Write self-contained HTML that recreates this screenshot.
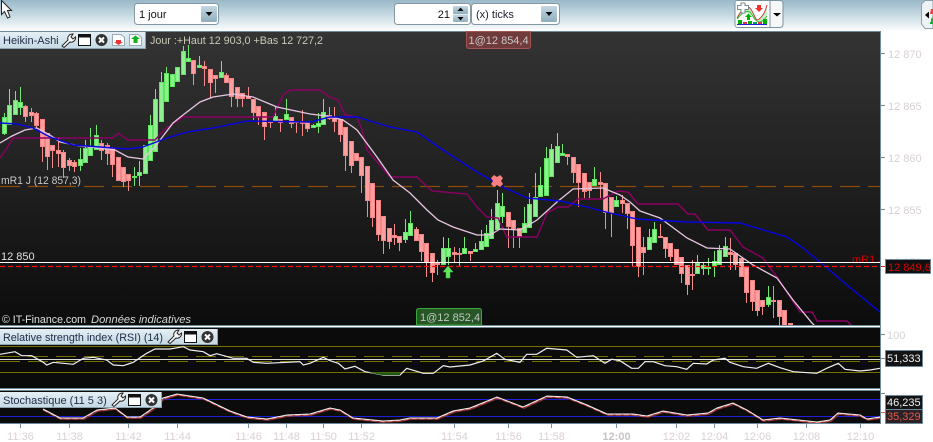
<!DOCTYPE html>
<html><head><meta charset="utf-8"><style>
html,body{margin:0;padding:0;background:#fff;width:933px;height:442px;overflow:hidden}
svg{display:block}
text{font-family:"Liberation Sans",Arial,sans-serif;font-size:11px}
</style></head><body>
<svg width="933" height="442" viewBox="0 0 933 442" xmlns="http://www.w3.org/2000/svg">
<defs>
<linearGradient id="top" x1="0" y1="0" x2="0" y2="1"><stop offset="0" stop-color="#9ab8c8"/><stop offset=".5" stop-color="#c8dbe3"/><stop offset="1" stop-color="#fdfefe"/></linearGradient>
<linearGradient id="pan" x1="0" y1="0" x2="0" y2="1"><stop offset="0" stop-color="#343434"/><stop offset=".45" stop-color="#222"/><stop offset="1" stop-color="#0c0c0c"/></linearGradient>
<linearGradient id="btn" x1="0" y1="0" x2="0" y2="1"><stop offset="0" stop-color="#c4d8e2"/><stop offset="1" stop-color="#8fadbd"/></linearGradient>
<linearGradient id="leg" x1="0" y1="0" x2="0" y2="1"><stop offset="0" stop-color="#e4eff4"/><stop offset="1" stop-color="#c4d9e4"/></linearGradient>
<clipPath id="c1"><rect x="0" y="32" width="880" height="293"/></clipPath>
<clipPath id="c2"><rect x="0" y="391" width="880" height="32"/></clipPath>
</defs>

<rect x="0" y="0" width="933" height="31" fill="url(#top)"/>
<rect x="881" y="31" width="52" height="411" fill="#fff"/>
<rect x="0" y="31" width="880" height="294" fill="url(#pan)"/>
<rect x="0" y="31" width="881" height="1" fill="#70899a"/>
<rect x="880" y="31" width="1" height="393" fill="#70899a"/>
<rect x="0" y="325" width="881" height="1" fill="#70899a"/>
<rect x="0" y="327" width="881" height="1" fill="#70899a"/>
<rect x="0" y="328" width="880" height="60" fill="#0b0b0b"/>
<rect x="0" y="388" width="881" height="1" fill="#70899a"/>
<rect x="0" y="390" width="881" height="1" fill="#70899a"/>
<rect x="0" y="391" width="880" height="32" fill="#0b0b0b"/>
<rect x="0" y="423" width="881" height="1" fill="#70899a"/>

<!-- cursor -->
<path d="M1.500 .5V14.500L4.500 11.500L7.500 18L10 17L7.500 10.500H11.500L1.500 .5Z" fill="#fff" stroke="#222" stroke-width="1"/>

<!-- selects -->
<rect x="134.500" y="3.500" width="84" height="21" rx="3" fill="#fff" stroke="#8498a4"/>
<text x="139" y="18" font-size="11" fill="#111">1 jour</text>
<rect x="201" y="6" width="16" height="16" rx="1" fill="url(#btn)"/>
<path d="M205.500 12h7l-3.500 4z" fill="#000"/>

<rect x="394.500" y="3.500" width="76" height="21" rx="3" fill="#fff" stroke="#8498a4"/>
<text x="450" y="18" text-anchor="end" fill="#111">21</text>
<rect x="453" y="6" width="15" height="8" rx="1" fill="url(#btn)"/>
<rect x="453" y="14.500" width="15" height="7.500" rx="1" fill="url(#btn)"/>
<path d="M457.500 11h6l-3-3.500zM457.500 17h6l-3 3.500z" fill="#000"/>

<rect x="471.500" y="3.500" width="88" height="21" rx="3" fill="#fff" stroke="#8498a4"/>
<text x="476" y="18" fill="#223">(x) ticks</text>
<rect x="541" y="6" width="16" height="16" rx="1" fill="url(#btn)"/>
<path d="M545.500 12h7l-3.500 4z" fill="#000"/>

<!-- strategy button -->
<rect x="735" y=".5" width="48" height="27" rx="3" fill="#f6f8f8" stroke="#7a919e"/>
<rect x="735.500" y="1" width="34" height="26" rx="2" fill="#fff"/>
<rect x="769.500" y="1" width="1" height="26" fill="#7a919e"/>
<path d="M773 13h8l-4 3.500z" fill="#000"/>
<path d="M737 17C742 8 746 5 750 8C754 13 755 18 757 21C760 17 764 16 767 8V16C763 23 756 23 753 18C750 12 745 10 737 19Z" fill="#c8eec8"/>
<path d="M737 18C742 9 746 5 750 8C754 13 755 19 757 20C761 19 765 13 767 5" fill="none" stroke="#d04040" stroke-width="1"/>
<path d="M737 19C742 13 746 10 750 12C754 17 756 22 759 22C762 22 765 19 767 16" fill="none" stroke="#30c030" stroke-width="1"/>
<path d="M737.500 8.500V5.500H741V3H745V5.500H748.500V9.500H745V13H741V9.500H737.500Z" fill="#fff" stroke="#7a8a92"/>
<path d="M748.500 13.500l-3.500 3.500h2v3h3v-3h2z" fill="#00b000"/>
<path d="M757 5h4v3h2l-4 4-4-4h2z" fill="#f03030"/>
<rect x="738" y="20" width="4" height="4" fill="#00b000"/><rect x="743" y="22" width="4" height="2" fill="#e03050"/><rect x="748" y="21" width="4" height="3" fill="#00b000"/><rect x="753" y="22" width="4" height="2" fill="#00a060"/><rect x="758" y="22" width="4" height="2" fill="#e03050"/><rect x="763" y="19" width="4" height="5" fill="#00b000"/>
<rect x="737" y="24" width="30" height="1" fill="#2020e0"/>

<!-- far right button -->
<path d="M933 .5H925L921.500 4V24L925 28.500H933Z" fill="#edf2f4" stroke="#8aa0ac"/>
<path d="M925 15l4-3.500v7z" fill="#000"/>
<path d="M931 9h2v5h-3z" fill="#f04040"/>
<path d="M931 19l2-2v7h-3v-2h1z" fill="#10b030"/>

<!-- chart content -->
<g clip-path="url(#c1)">
<path d="M0 186.500H880" stroke="#8a4c08" stroke-width="1.200" stroke-dasharray="20 8"/>
<g stroke="#f58c8c" stroke-width="1" fill="none">
<path d="M25.500 105V122M31.500 108V122M36.500 112V128M42.500 119V162M47.500 133V170M52.500 145V168M58.500 137V167M63.500 150V178M69.500 158V171M74.500 160V172M101.500 140V160M107.500 143V165M112.500 147V177M118.500 157V180M123.500 167V187M128.500 174V191M193.500 60V85M204.500 61V86M210.500 69V98M215.500 75V93M226.500 73V83M231.500 78V107M237.500 87V107M242.500 93V107M248.500 87V99M253.500 99V120M258.500 106V125M264.500 112V140M270.500 121V128M280.500 119V132M291.500 117V128M296.500 121V133M302.500 110V136M307.500 122V132M329.500 107V120M334.500 107V132M340.500 119V142M345.500 127V171M351.500 141V173M356.500 153V161M361.500 157V193M367.500 166V217M372.500 183V227M378.500 200V241M383.500 216V254M389.500 228V249M394.500 224V245M399.500 236V251M416.500 227V241M421.500 234V261M426.500 243V277M432.500 253V282M437.500 260V275M454.500 247V263M459.500 248V266M470.500 251V261M508.500 212V248M513.500 220V248M519.500 228V248M567.500 154V165M573.500 157V183M578.500 164V207M584.500 173V198M589.500 182V198M600.500 172V198M605.500 183V229M611.500 197V237M622.500 195V213M627.500 203V229M632.500 211V267M638.500 227V277M643.500 237V275M660.500 224V238M665.500 237V258M670.500 243V261M676.500 249V265M681.500 257V283M687.500 265V295M692.500 260V290M730.500 238V270M735.500 253V270M741.500 258V277M746.500 267V303M752.500 280V311M757.500 290V316M762.500 300V315M773.500 286V318M779.500 300V325M784.500 310V326M790.500 323V326"/>
</g>
<path fill="#ff9f9f" stroke="#f68484" d="M23.500 106.500h4v10h-4zM29.500 112.500h4v3h-4zM34.500 113.500h4v12h-4zM40.500 119.500h4v27h-4zM45.500 133.500h4v23h-4zM50.500 145.500h4v5h-4zM56.500 150.500h4v3h-4zM61.500 152.500h4v15h-4zM67.500 160.500h4v5h-4zM72.500 162.500h4v4h-4zM99.500 143.500h4v7h-4zM105.500 145.500h4v8h-4zM110.500 148.500h4v16h-4zM116.500 157.500h4v23h-4zM121.500 167.500h4v14h-4zM126.500 174.500h4v6h-4zM191.500 60.500h4v13h-4zM202.500 66.500h4v2h-4zM208.500 69.500h4v13h-4zM213.500 75.500h4v3h-4zM224.500 75.500h4v7h-4zM229.500 78.500h4v18h-4zM235.500 87.500h4v11h-4zM240.500 93.500h4v5h-4zM246.500 96.500h4v2h-4zM251.500 99.500h4v13h-4zM256.500 106.500h4v10h-4zM262.500 112.500h4v14h-4zM268.500 121.500h4v1h-4zM278.500 119.500h4v3h-4zM289.500 117.500h4v6h-4zM294.500 121.500h4v1h-4zM300.500 122.500h4v1h-4zM305.500 122.500h4v6h-4zM327.500 115.500h4v3h-4zM332.500 117.500h4v4h-4zM338.500 119.500h4v15h-4zM343.500 127.500h4v28h-4zM349.500 141.500h4v24h-4zM354.500 153.500h4v7h-4zM359.500 157.500h4v18h-4zM365.500 166.500h4v34h-4zM370.500 183.500h4v34h-4zM376.500 200.500h4v34h-4zM381.500 216.500h4v24h-4zM387.500 228.500h4v13h-4zM392.500 235.500h4v2h-4zM397.500 236.500h4v6h-4zM414.500 229.500h4v11h-4zM419.500 234.500h4v17h-4zM424.500 243.500h4v19h-4zM430.500 253.500h4v19h-4zM435.500 263.500h4v1h-4zM452.500 252.500h4v2h-4zM457.500 253.500h4v1h-4zM468.500 251.500h4v2h-4zM506.500 212.500h4v14h-4zM511.500 220.500h4v8h-4zM517.500 228.500h4v8h-4zM565.500 154.500h4v2h-4zM571.500 157.500h4v15h-4zM576.500 164.500h4v18h-4zM582.500 173.500h4v18h-4zM587.500 182.500h4v8h-4zM598.500 182.500h4v2h-4zM603.500 183.500h4v29h-4zM609.500 197.500h4v15h-4zM620.500 200.500h4v3h-4zM625.500 203.500h4v10h-4zM630.500 211.500h4v34h-4zM636.500 227.500h4v39h-4zM641.500 247.500h4v5h-4zM658.500 236.500h4v1h-4zM663.500 237.500h4v11h-4zM668.500 243.500h4v13h-4zM674.500 249.500h4v15h-4zM679.500 257.500h4v16h-4zM685.500 265.500h4v19h-4zM690.500 274.500h4v1h-4zM728.500 252.500h4v2h-4zM733.500 253.500h4v11h-4zM739.500 258.500h4v18h-4zM744.500 267.500h4v25h-4zM750.500 280.500h4v21h-4zM755.500 290.500h4v20h-4zM760.500 300.500h4v6h-4zM771.500 300.500h4v1h-4zM777.500 300.500h4v16h-4zM782.500 310.500h4v16h-4zM788.500 323.500h4v3h-4z"/>
<g stroke="#74e874" stroke-width="1" fill="none">
<path d="M4.500 113V135M9.500 89V125M15.500 91V115M20.500 87V115M80.500 148V171M85.500 140V163M90.500 128V156M96.500 125V150M134.500 167V186M139.500 161V186M145.500 145V174M150.500 115V161M155.500 89V152M161.500 72V122M166.500 67V102M172.500 74V87M177.500 67V82M183.500 46V75M188.500 45V62M199.500 56V68M221.500 61V78M275.500 107V122M286.500 99V120M313.500 124V128M318.500 113V133M323.500 99V125M405.500 219V243M410.500 211V236M443.500 237V265M448.500 238V265M464.500 237V254M475.500 243V252M481.500 230V250M486.500 225V247M491.500 209V239M497.500 190V230M502.500 193V223M524.500 207V233M529.500 193V228M535.500 173V217M540.500 167V197M546.500 147V196M551.500 144V177M557.500 133V163M562.500 144V156M594.500 167V186M616.500 196V207M649.500 229V250M654.500 222V243M697.500 255V274M703.500 262V275M708.500 258V275M714.500 251V277M719.500 245V265M725.500 237V257M768.500 286V307"/>
</g>
<path fill="#8ff08f" stroke="#5ee65e" d="M2.500 117.500h4v16h-4zM7.500 105.500h4v19h-4zM13.500 100.500h4v14h-4zM18.500 102.500h4v5h-4zM78.500 159.500h4v6h-4zM83.500 148.500h4v14h-4zM88.500 147.500h4v8h-4zM94.500 135.500h4v14h-4zM132.500 176.500h4v1h-4zM137.500 172.500h4v3h-4zM143.500 145.500h4v28h-4zM148.500 125.500h4v35h-4zM153.500 99.500h4v52h-4zM159.500 82.500h4v39h-4zM164.500 73.500h4v28h-4zM170.500 74.500h4v12h-4zM175.500 67.500h4v14h-4zM181.500 51.500h4v23h-4zM186.500 58.500h4v3h-4zM197.500 65.500h4v2h-4zM219.500 72.500h4v5h-4zM273.500 116.500h4v5h-4zM284.500 114.500h4v5h-4zM311.500 125.500h4v2h-4zM316.500 123.500h4v3h-4zM321.500 112.500h4v12h-4zM403.500 232.500h4v7h-4zM408.500 223.500h4v12h-4zM441.500 248.500h4v16h-4zM446.500 248.500h4v8h-4zM462.500 248.500h4v5h-4zM473.500 249.500h4v2h-4zM479.500 241.500h4v8h-4zM484.500 233.500h4v13h-4zM489.500 220.500h4v18h-4zM495.500 203.500h4v26h-4zM500.500 206.500h4v10h-4zM522.500 223.500h4v9h-4zM527.500 204.500h4v23h-4zM533.500 197.500h4v19h-4zM538.500 185.500h4v11h-4zM544.500 158.500h4v37h-4zM549.500 149.500h4v27h-4zM555.500 146.500h4v16h-4zM560.500 153.500h4v2h-4zM592.500 179.500h4v6h-4zM614.500 200.500h4v6h-4zM647.500 237.500h4v12h-4zM652.500 229.500h4v13h-4zM695.500 263.500h4v10h-4zM701.500 265.500h4v3h-4zM706.500 267.500h4v1h-4zM712.500 261.500h4v5h-4zM717.500 250.500h4v14h-4zM723.500 246.500h4v10h-4zM766.500 297.500h4v7h-4z"/>

<path d="M0 158L7 148L13 138H113L118 133L128 140H155L165 129L183 117H273L283 95L290 90H320L330 97L338 100L345 115L357 117L362 130L367 150L390 177H417L432 191L467 194L477 207L487 217L498 218L507 237H537L547 213L558 207H568L578 199H603L618 191L628 192L638 204H678L688 214H695L708 230H730L743 247L763 258L777 277L800 312H812L817 321H847L852 326" fill="none" stroke="#8c0064" stroke-width="1.400"/>
<path d="M0 143L12 136L25 130L37 128L50 135L60 142L80 146L115 150L128 157L143 159L154 148L173 123L183 115L200 102L213 97L233 94L253 97L277 107L310 114L327 116L343 120L353 127L357 130L377 157L393 180L410 193L427 210L438 220L453 227L477 235H490L500 229L520 230L537 220L557 202L573 189L603 188L620 195L630 202L640 211L660 218L687 238L707 248L730 249L753 265L777 278L793 300L812 323L816 327" fill="none" stroke="#e8c6e2" stroke-width="1.300"/>
<path d="M0 123L17 124L33 128L50 137L73 145L100 147L127 149L143 147L167 138L187 132L213 128L247 121L310 122L330 117H357L390 127L417 132L443 150L477 172L503 187L527 198L560 201L587 207L610 213L637 219L687 222L740 223L787 237L803 248L827 268L853 290L880 312" fill="none" stroke="#0404e4" stroke-width="1.400"/>

<text x="852" y="263" fill="#cc0000">mR1 J</text>
<rect x="0" y="262" width="880" height="1" fill="#fff"/>
<path d="M0 266.500H880" stroke="#f01010" stroke-width="1.200" stroke-dasharray="5 3"/>

<!-- markers -->
<path d="M491 178L494 175L497 177L500 175L503 178L501 181L503 184L500 187L497 185L494 187L491 184L493 181Z" fill="#f98080"/>
<path d="M448 266L453 272H450V278H446V272H443Z" fill="#5ee65e" stroke="#3fc73f" stroke-width=".5"/>
</g>

<text x="1" y="184" fill="#c8c8c8" textLength="80" lengthAdjust="spacingAndGlyphs">mR1 J (12 857,3)</text>
<text x="1" y="260" fill="#e0e0e0">12 850</text>
<text x="2" y="323" fill="#e0e0e0" textLength="84" lengthAdjust="spacingAndGlyphs">© IT-Finance.com</text>
<text x="91" y="323" fill="#d8d8d8" font-style="italic" textLength="100" lengthAdjust="spacingAndGlyphs">Données indicatives</text>

<!-- legend -->
<rect x="0" y="32" width="146" height="17" fill="url(#leg)"/>
<rect x="0" y="48" width="146" height="1" fill="#8ba3b0"/><rect x="145" y="32" width="1" height="17" fill="#8ba3b0"/>
<text x="3" y="44" fill="#1c2a48">Heikin-Ashi</text>
<path d="M62 46L68 40C67 37 69 34 73 34L71 37L73 39L75.500 37C76 40 73 43 70 42L64 47.500Z" fill="#fff" stroke="#222" stroke-width="1"/>
<rect x="78.500" y="34.500" width="12" height="11" fill="#fff" stroke="#111"/><rect x="78.500" y="34.500" width="12" height="3" fill="#111"/>
<circle cx="101.500" cy="40" r="6" fill="#333"/><path d="M99 37.500L104 42.500M104 37.500L99 42.500" stroke="#fff" stroke-width="2"/>
<path d="M112.500 34.500H121L124.500 37.500V45.500H112.500Z" fill="#fff" stroke="#99aab4"/><path d="M115 38H122M116 40H121V42H123L118.500 45L114 42H116Z" fill="#e83838"/>
<path d="M129.500 34.500H138L141.500 37.500V45.500H129.500Z" fill="#fff" stroke="#99aab4"/><path d="M135.500 35.500L140 39H137.500V43H133.500V39H131Z" fill="#10b020"/>
<text x="150" y="44" fill="#c9c9b4" textLength="173" lengthAdjust="spacingAndGlyphs">Jour :+Haut 12 903,0 +Bas 12 727,2</text>

<!-- trade tags -->
<path d="M466.500 31.500H530.500V46C530.500 47.500 529.500 48.500 528 48.500H469C467.500 48.500 466.500 47.500 466.500 46Z" fill="#713b3b" stroke="#a05454"/>
<text x="468.500" y="44" fill="#c8c8c8">1@12 854,4</text>
<path d="M416.500 325V311C416.500 309.500 417.500 308.500 419 308.500H479.500C481 308.500 481.500 309.500 481.500 311V325Z" fill="#275727" stroke="#38a838"/>
<text x="420" y="321" fill="#c0c8c0">1@12 852,4</text>

<!-- right axis -->
<g fill="#74899a">
<rect x="881" y="53" width="4" height="1"/><rect x="881" y="105" width="4" height="1"/><rect x="881" y="157" width="4" height="1"/><rect x="881" y="209" width="4" height="1"/><rect x="881" y="334" width="4" height="1"/>
<rect x="881" y="266" width="4" height="1" fill="#e02020"/><rect x="881" y="358" width="4" height="1"/><rect x="881" y="393" width="4" height="1"/><rect x="881" y="412" width="4" height="1" fill="#e06060"/>
</g>
<g fill="#d8d2d2">
<text x="888" y="58">12 870</text><text x="888" y="110">12 865</text><text x="888" y="162">12 860</text><text x="888" y="214">12 855</text>
<text x="888" y="266">12 850</text>
<text x="887" y="339" font-size="13">100</text>
<text x="888" y="402" font-size="13">100</text>
</g>
<rect x="885.500" y="259.500" width="45" height="14" fill="#101010" stroke="#70899a"/>
<text x="888" y="271" fill="#dc0000" font-size="11.500">12 849,6</text>
<rect x="885.500" y="350.500" width="37" height="16" fill="#141414" stroke="#70899a"/>
<text x="887" y="362" fill="#eee">51,333</text>
<rect x="885.500" y="395.500" width="37" height="14" fill="#141414" stroke="#70899a"/>
<text x="887" y="406" fill="#eee">46,235</text>
<rect x="885.500" y="409.500" width="37" height="14" fill="#2a2224" stroke="#70899a"/>
<text x="887" y="420" fill="#e05a50">35,329</text>

<!-- RSI -->
<path d="M0 346.500H880M0 372.500H880" stroke="#757000" fill="none"/>
<path d="M0 356.500H880M0 361.500H880" stroke="#757000" stroke-dasharray="20 8" fill="none"/>
<path d="M0 359.500H880" stroke="#dcdcdc" fill="none"/>
<path d="M0 354.300L15 351.700L21.700 355.700L31.700 355.700L43.300 362.300L46.700 365L53.300 362.300L73.300 364.300L83.300 358.300L93.300 357.300L106.700 360L113.300 365L123.300 365.700L133.300 362.300L146.700 353.300L155 349L170 349L183.300 346.700L190 350L203.300 351.700L210 355.700L216.700 353.700L233.300 358.300L246.700 358.300L253.300 362.300L266.700 363.300L300 361.700L303.300 365L310 363.300L323.300 357.300L330 360.700L338.300 363.300L345 369L355 366.300L365 371.700L383.300 375L400 375L406.700 368.300L423.300 373.300L433.300 373.300L443.300 365.700L450 367L470 365L483.300 361L496.700 353.300L505 359.300L520 362.300L526.700 354.300L536.700 354.300L546.700 348.300L566.700 350L576.700 357.300L593.300 355.700L605 363.300L611.700 359.300L620 360.700L631.700 368.300L638.300 368.300L645 361.700L653.300 361.700L665 365.700L676.700 366.700L686.700 369.300L693.300 363.300L706.700 364L713.300 360L725 358.300L730 362.300L743.300 366.700L756.700 368.300L768.300 363.300L780 367.700L793.300 371.700L816.700 373.300L826.700 368.300L838.300 363.300L845 369.300L860 371L870 370L880 368.300" fill="none" stroke="#f0f0f0" stroke-width="1.200"/>
<path d="M368 372.500L382 375L400 375L400 372.500Z" fill="#1c5a10"/>
<rect x="0" y="329" width="217" height="16" fill="url(#leg)"/>
<rect x="0" y="344" width="217" height="1" fill="#8ba3b0"/><rect x="217" y="329" width="1" height="16" fill="#8ba3b0"/>
<text x="3" y="341" fill="#1c2a48" textLength="160" lengthAdjust="spacingAndGlyphs">Relative strength index (RSI) (14)</text>
<path d="M168 342L174 336C173 333 175 330 179 330L177 333L179 335L181.500 333C182 336 179 339 176 338L170 343.500Z" fill="#fff" stroke="#222" stroke-width="1"/>
<rect x="184.500" y="331.500" width="12" height="11" fill="#fff" stroke="#111"/><rect x="184.500" y="331.500" width="12" height="3" fill="#111"/>
<circle cx="207.500" cy="337" r="6" fill="#333"/><path d="M205 334.500L210 339.500M210 334.500L205 339.500" stroke="#fff" stroke-width="2"/>

<!-- Stochastic -->
<g clip-path="url(#c2)">
<path d="M0 399.500H880M0 416.500H880" stroke="#2020dc" fill="none"/>
<path d="M43 409L60 418L83 418L97 410L115 408L127 417L140 417L153 408L163 398L177 394L203 398L230 411L247 417L267 419L287 415L310 414L330 408L340 410L353 418L383 421L400 420L410 418L437 418L453 411L470 408L497 397L523 407L547 396L567 397L587 405L607 414L620 414L633 414L647 416L663 411L687 415L708 413L717 408L733 403L747 410L763 420L780 418L817 422L830 420L838 413L860 415L867 419L880 417" fill="none" stroke="#7a3030" stroke-width="1.800" transform="translate(1,1)"/>
<path d="M43 409L60 418L83 418L97 410L115 408L127 417L140 417L153 408L163 398L177 394L203 398L230 411L247 417L267 419L287 415L310 414L330 408L340 410L353 418L383 421L400 420L410 418L437 418L453 411L470 408L497 397L523 407L547 396L567 397L587 405L607 414L620 414L633 414L647 416L663 411L687 415L708 413L717 408L733 403L747 410L763 420L780 418L817 422L830 420L838 413L860 415L867 419L880 417" fill="none" stroke="#e86060" stroke-dasharray="5 3" stroke-width="1" transform="translate(0,.8)"/>
<path d="M43 409L60 418L83 418L97 410L115 408L127 417L140 417L153 408L163 398L177 394L203 398L230 411L247 417L267 419L287 415L310 414L330 408L340 410L353 418L383 421L400 420L410 418L437 418L453 411L470 408L497 397L523 407L547 396L567 397L587 405L607 414L620 414L633 414L647 416L663 411L687 415L708 413L717 408L733 403L747 410L763 420L780 418L817 422L830 420L838 413L860 415L867 419L880 417" fill="none" stroke="#f4f4f4" stroke-width="1"/>
</g>
<rect x="0" y="392" width="162" height="16" fill="url(#leg)"/>
<rect x="0" y="407" width="162" height="1" fill="#8ba3b0"/><rect x="161" y="392" width="1" height="16" fill="#8ba3b0"/>
<text x="3" y="404" fill="#1c2a48">Stochastique (11 5 3)</text>
<path d="M112 405L118 399C117 396 119 393 123 393L121 396L123 398L125.500 396C126 399 123 402 120 401L114 406.500Z" fill="#fff" stroke="#222" stroke-width="1"/>
<rect x="128.500" y="394.500" width="12" height="11" fill="#fff" stroke="#111"/><rect x="128.500" y="394.500" width="12" height="3" fill="#111"/>
<circle cx="151.500" cy="400" r="6" fill="#333"/><path d="M149 397.500L154 402.500M154 397.500L149 402.500" stroke="#fff" stroke-width="2"/>

<!-- time axis -->
<path d="M20.500 424V428M69.500 424V428M128.500 424V428M177.500 424V428M248.500 424V428M286.500 424V428M323.500 424V428M361.500 424V428M454.500 424V428M508.500 424V428M551.500 424V428M616.500 424V428M676.500 424V428M714.500 424V428M757.500 424V428M806.500 424V428M860.500 424V428" stroke="#7a919e" fill="none"/>
<g fill="#d9d0d6" text-anchor="middle">
<text x="20.500" y="440">11:36</text><text x="69.500" y="440">11:38</text><text x="128.500" y="440">11:42</text><text x="177.500" y="440">11:44</text><text x="248.500" y="440">11:46</text><text x="286.500" y="440">11:48</text><text x="323.500" y="440">11:50</text><text x="361.500" y="440">11:52</text><text x="454.500" y="440">11:54</text><text x="508.500" y="440">11:56</text><text x="551.500" y="440">11:58</text>
<text x="616.500" y="440" font-weight="bold" font-size="12" fill="#c8c4c6">12:00</text>
<text x="676.500" y="440">12:02</text><text x="714.500" y="440">12:04</text><text x="757.500" y="440">12:06</text><text x="806.500" y="440">12:08</text><text x="860.500" y="440">12:10</text>
</g>
</svg>
</body></html>
